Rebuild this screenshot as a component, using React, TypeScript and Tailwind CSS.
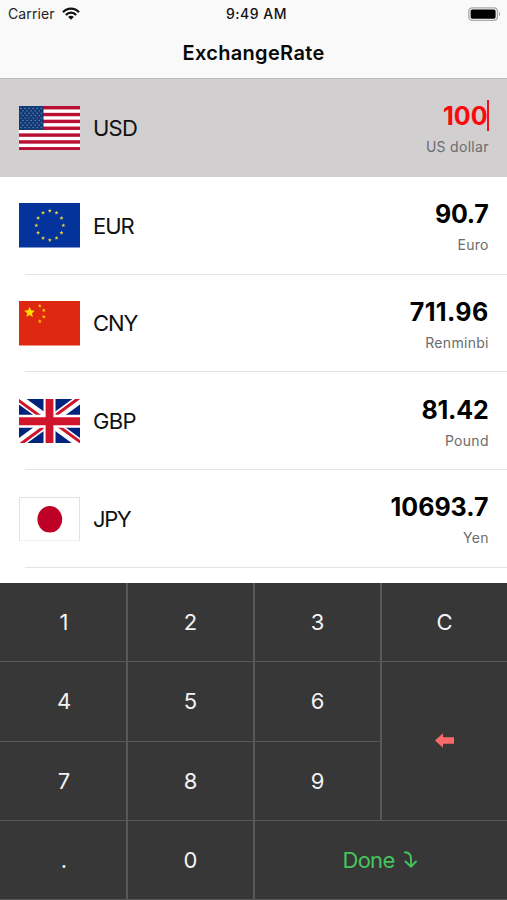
import type { ReactNode } from 'react';

function starPoints(cx: number, cy: number, r: number) {
  const pts: string[] = [];
  for (let i = 0; i < 10; i++) {
    const rad = i % 2 === 0 ? r : r * 0.45;
    const a = (Math.PI / 5) * i - Math.PI / 2;
    pts.push(`${(cx + rad * Math.cos(a)).toFixed(2)},${(cy + rad * Math.sin(a)).toFixed(2)}`);
  }
  return pts.join(' ');
}

function Flag({ children }: { children: ReactNode }) {
  return (
    <svg viewBox="0 0 61 44.5" preserveAspectRatio="none" className="h-[44.5px] w-[61px] shrink-0">
      {children}
    </svg>
  );
}

function UsFlag() {
  const stripe = 44.5 / 13;
  const stars: ReactNode[] = [];
  for (let row = 0; row < 9; row++) {
    const count = row % 2 === 0 ? 6 : 5;
    for (let col = 0; col < count; col++) {
      const cx = (row % 2 === 0 ? 2 : 4) + col * 4.05;
      stars.push(<circle key={`${row}-${col}`} cx={cx} cy={2.4 + row * 2.4} r="0.6" fill="#8fa5cc" />);
    }
  }
  return (
    <Flag>
      <rect width="61" height="44.5" fill="#fff" />
      {[0, 2, 4, 6, 8, 10, 12].map((i) => (
        <rect key={i} y={i * stripe} width="61" height={stripe} fill="#b90f32" />
      ))}
      <rect width="24.5" height={stripe * 7} fill="#123a76" />
      {stars}
    </Flag>
  );
}

function EuFlag() {
  return (
    <Flag>
      <rect width="61" height="44.5" fill="#03339b" />
      {Array.from({ length: 12 }, (_, i) => {
        const a = (Math.PI / 6) * i;
        return (
          <polygon
            key={i}
            points={starPoints(30.8 + 13.5 * Math.sin(a), 22.4 - 14.6 * Math.cos(a), 2.1)}
            fill="#e8cf38"
          />
        );
      })}
    </Flag>
  );
}

function CnFlag() {
  return (
    <Flag>
      <rect width="61" height="44.5" fill="#de2910" />
      <polygon points={starPoints(10.6, 11.4, 5.6)} fill="#ffde00" />
      <polygon points={starPoints(20.8, 5, 2)} fill="#ffc800" />
      <polygon points={starPoints(24.8, 9.3, 2)} fill="#ffc800" />
      <polygon points={starPoints(24.8, 15.8, 2)} fill="#ffc800" />
      <polygon points={starPoints(20.8, 20.3, 2)} fill="#ffc800" />
    </Flag>
  );
}

function GbFlag() {
  return (
    <Flag>
      <rect width="61" height="44.5" fill="#00247d" />
      <path d="M0 0L61 44.5M61 0L0 44.5" stroke="#fff" strokeWidth="9" />
      <path
        d="M-1 1L30.5 24M62 43.5L30.5 20.5M60 -1L30.5 20.7M1 45.5L30.5 23.8"
        stroke="#cf142b"
        strokeWidth="3"
      />
      <path d="M30.5 0V44.5" stroke="#fff" strokeWidth="12" />
      <path d="M0 22.25H61" stroke="#fff" strokeWidth="13" />
      <path d="M30.5 0V44.5M0 22.25H61" stroke="#cf142b" strokeWidth="7.8" />
    </Flag>
  );
}

function JpFlag() {
  return (
    <Flag>
      <rect x="0.5" y="0.5" width="60" height="43.5" fill="#fff" stroke="#e2e2e2" />
      <ellipse cx="30.8" cy="22.3" rx="12.4" ry="13.2" fill="#be0027" />
    </Flag>
  );
}

type Row = {
  code: string;
  value: string;
  name: string;
  flag: ReactNode;
  codeTracking: string;
  valueTracking: string;
  active?: boolean;
};

const rows: Row[] = [
  { code: 'USD', value: '100', name: 'US dollar', flag: <UsFlag />, codeTracking: 'tracking-[-0.8px]', valueTracking: 'tracking-normal', active: true },
  { code: 'EUR', value: '90.7', name: 'Euro', flag: <EuFlag />, codeTracking: 'tracking-[-1px]', valueTracking: 'tracking-[-0.3px]' },
  { code: 'CNY', value: '711.96', name: 'Renminbi', flag: <CnFlag />, codeTracking: 'tracking-[-1.1px]', valueTracking: 'tracking-[0.35px]' },
  { code: 'GBP', value: '81.42', name: 'Pound', flag: <GbFlag />, codeTracking: 'tracking-[-0.7px]', valueTracking: 'tracking-[-0.2px]' },
  { code: 'JPY', value: '10693.7', name: 'Yen', flag: <JpFlag />, codeTracking: 'tracking-[-1.4px]', valueTracking: 'tracking-normal' },
];

function CurrencyRow({ row }: { row: Row }) {
  return (
    <li className={row.active ? 'relative h-[97.75px] bg-[#d1cfd0]' : 'relative h-[97.75px] bg-white'}>
      <div className="flex h-full items-center pl-[19px] pr-[18.5px]">
        {row.flag}
        <span className={`ml-[13px] text-[22px] leading-[28px] text-[#111] ${row.codeTracking}`}>{row.code}</span>
        <div className="ml-auto flex flex-col items-end pt-[2px]">
          <span
            className={`text-[25px] font-bold leading-[32px] ${row.valueTracking} ${
              row.active ? 'relative mr-px text-[#fa0a0a]' : 'text-black'
            }`}
          >
            {row.value}
            {row.active && <span className="absolute -right-px top-0 h-[31px] w-[2px] bg-[#f01414]" />}
          </span>
          <span className="-mr-[0.3px] mt-[5px] text-[14px] leading-[20px] tracking-[0.3px] text-[#6c6c6c]">{row.name}</span>
        </div>
      </div>
      {!row.active && <div className="absolute bottom-0 left-[25px] right-0 h-px bg-[#e4e4e4]" />}
    </li>
  );
}

function Key({ children, className = '' }: { children: ReactNode; className?: string }) {
  return (
    <button className={`flex items-center justify-center border-[#585858] pt-px text-[22px] text-[#f3f3f3] ${className}`}>
      {children}
    </button>
  );
}

export default function App() {
  return (
    <div className="flex h-[900px] w-[507px] flex-col overflow-hidden bg-white font-['Inter','Liberation_Sans',sans-serif]">
      <header className="h-[79px] shrink-0 border-b border-[#bcbcbc] bg-[#f9f9f9]">
        <div className="grid h-[27px] grid-cols-3 items-center pl-[8px] pr-[6px] text-[14px]">
          <div className="flex items-center gap-[7px] text-[#222]">
            <span className="tracking-[0.1px]">Carrier</span>
            <svg viewBox="0 0 18 13" className="h-[13px] w-[18px]" fill="none" stroke="#111" strokeWidth="2.2">
              <path d="M1 5.2C5.4.4 12.6.4 17 5.2" />
              <path d="M3.8 8C6.8 4.9 11.2 4.9 14.2 8" />
              <path d="M6.1 9.9C7.8 8.3 10.2 8.3 11.9 9.9L9 12.8Z" fill="#111" stroke="none" />
            </svg>
          </div>
          <span className="pl-[4px] text-center font-medium tracking-[0.5px] text-[#111]">9:49 AM</span>
          <svg viewBox="0 0 33 14" className="h-[14px] w-[33px] justify-self-end">
            <rect x="0.8" y="0.8" width="28.6" height="12.6" rx="3.4" fill="#f9f9f9" stroke="#a9a9a9" strokeWidth="1.3" />
            <rect x="2.6" y="2.5" width="25" height="9.2" rx="1.6" fill="#000" />
            <path d="M31 5v4.2c1.5-.7 1.5-3.5 0-4.2z" fill="#999" />
          </svg>
        </div>
        <h1 className="text-center text-[20px] font-semibold leading-[52px] tracking-[0.33px] text-[#080808]">ExchangeRate</h1>
      </header>

      <ul className="h-[503.5px] shrink-0 overflow-hidden">
        {rows.map((row) => (
          <CurrencyRow key={row.code} row={row} />
        ))}
      </ul>

      <div className="grid flex-1 grid-cols-[128px_127px_127px_125px] grid-rows-[79.5px_79.5px_79.5px_79px] bg-[#373737]">
        <Key className="border-b border-r-2 pl-[2px]">1</Key>
        <Key className="border-b border-r-2">2</Key>
        <Key className="border-b border-r-2">3</Key>
        <Key className="border-b">C</Key>
        <Key className="border-b border-r-2 pl-[2px]">4</Key>
        <Key className="border-b border-r-2">5</Key>
        <Key className="border-b border-r-2">6</Key>
        <Key className="row-span-2 border-b">
          <svg viewBox="0 0 19 15" className="mb-[2px] h-[15px] w-[19px]" fill="#fb6a6a">
            <path d="M0 7.5L8 0.3V4.3H19V10.7H8V14.7Z" />
          </svg>
        </Key>
        <Key className="border-b border-r-2 pl-[2px]">7</Key>
        <Key className="border-b border-r-2">8</Key>
        <Key className="border-b border-r-2">9</Key>
        <Key className="border-b border-r-2 pl-[2px]">.</Key>
        <Key className="border-b border-r-2">0</Key>
        <Key className="col-span-2 gap-[9px] border-b pr-[3px]">
          <span className="tracking-[-0.7px] text-[#45c45c]">Done</span>
          <svg viewBox="0 0 13 17" className="mb-[2px] h-[17px] w-[13px]" fill="none" stroke="#45c45c" strokeWidth="1.9" strokeLinecap="round">
            <path d="M1 1.3C5 1.4 7 4 7 8V15" />
            <path d="M1.5 10.5L7 15.6L12 10.5" />
          </svg>
        </Key>
      </div>
    </div>
  );
}
